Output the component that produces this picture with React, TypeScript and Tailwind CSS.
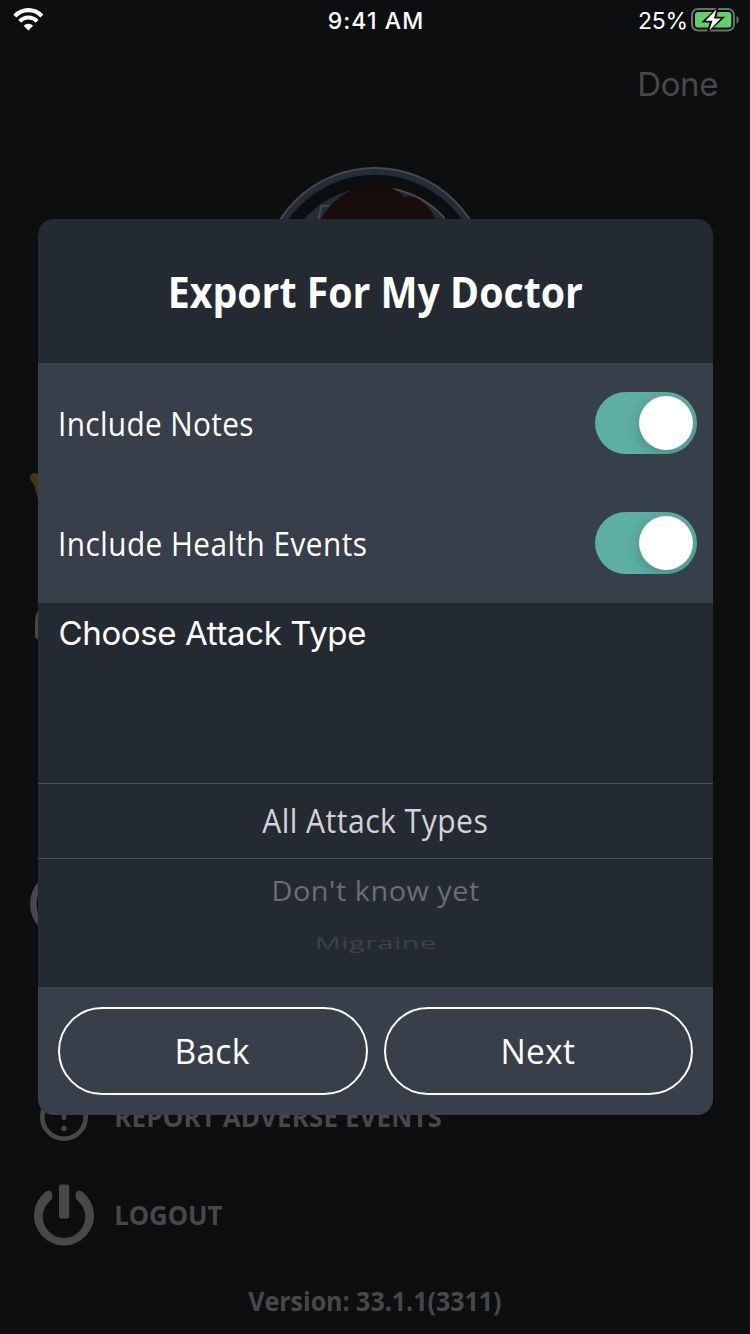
import type { ReactNode } from "react";

const sans = "font-['Open_Sans','Noto_Sans',sans-serif]";

function WifiIcon() {
  return (
    <svg width="30" height="23" viewBox="0 0 30 23" fill="none">
      <path d="M1.9 8.1 A18.4 18.4 0 0 1 28.9 8.1" stroke="#fff" strokeWidth="4.2" />
      <path d="M6.8 13.3 A11.6 11.6 0 0 1 24 13.3" stroke="#fff" strokeWidth="4.2" />
      <path d="M10.7 17.8 A6.6 6.6 0 0 1 20.1 17.8 L15.4 22.6 Z" fill="#fff" />
    </svg>
  );
}

function BatteryIcon() {
  return (
    <svg width="48" height="24" viewBox="0 0 48 24" fill="none">
      <rect x="1" y="1" width="42" height="21.5" rx="6" stroke="#6d6e70" strokeWidth="2" />
      <path d="M45.5 8 C48.5 9 48.5 14.5 45.5 15.5 Z" fill="#6d6e70" />
      <rect x="4" y="4" width="36.3" height="15.5" rx="3.2" fill="#65d06b" />
      <path d="M26.6 0 L12 13.8 H19.6 L17 23.6 L32.4 9.4 H24.8 Z" fill="#0c0e10" stroke="#0c0e10" strokeWidth="1.5" />
      <path d="M25.4 1.4 L14.6 12.8 H21.4 L18.4 22.2 L29.8 10.4 H22.9 Z" fill="#fff" />
    </svg>
  );
}

function Avatar() {
  return (
    <svg width="228" height="228" viewBox="0 0 228 228" fill="none">
      <circle cx="114" cy="114" r="109.5" stroke="#222d38" strokeWidth="6.4" />
      <circle cx="114" cy="114" r="113" stroke="#484848" strokeWidth="2" />
      <circle cx="114" cy="114" r="94" fill="#222d38" />
      <path d="M132 21.8 A94 94 0 0 1 184 51.5" stroke="#4b4b4b" strokeWidth="1.8" />
      <path d="M57.5 53 L60.5 38.5 L69 39.5" stroke="#484848" strokeWidth="2" />
      <path d="M59 54 C68 36 88 18.5 112 18.5 C126 18 139 23 143 30 C156 26 168 38 176 54 L176 80 H59 Z" fill="#180d0a" />
    </svg>
  );
}

function TrophyIcon() {
  return (
    <svg width="68" height="60" viewBox="0 0 68 60" fill="none">
      <circle cx="4.8" cy="7.8" r="4.8" fill="#42361a" />
      <path d="M1 10.5 L3.5 14 L8 29 L14 30 L9.6 7 Z" fill="#42361a" />
    </svg>
  );
}

function CardIcon() {
  return (
    <svg width="60" height="32" viewBox="0 0 60 32" fill="none">
      <path d="M5 0 C2 4 1 9 1 15 V26 C1 29 2.5 30.5 6 30.5 H54 V0 Z" fill="#484848" />
    </svg>
  );
}

function InfoIcon() {
  return (
    <svg width="68" height="68" viewBox="0 0 68 68" fill="none">
      <circle cx="34" cy="34" r="30.7" stroke="#484848" strokeWidth="6.5" />
    </svg>
  );
}

function AlertIcon() {
  return (
    <svg width="48" height="48" viewBox="0 0 48 48" fill="none">
      <circle cx="24" cy="24" r="21.7" stroke="#484848" strokeWidth="4.6" />
      <path d="M24 12 V25" stroke="#484848" strokeWidth="4.6" strokeLinecap="round" />
      <circle cx="24" cy="35.4" r="2.6" fill="#484848" />
    </svg>
  );
}

function PowerIcon() {
  return (
    <svg width="60" height="62" viewBox="0 0 60 62" fill="none">
      <path
        d="M11.3 8 C14 6 18.3 6.5 18.3 10 V13.3 C18.3 14.8 17.6 15.4 16.7 16.2 A21.2 21.2 0 1 0 43.3 16.2 C42.4 15.4 41.7 14.8 41.7 13.3 V10 C41.7 6.5 46 6 48.7 8 A30 30 0 1 1 11.3 8 Z"
        fill="#484848"
      />
      <rect x="25" y="0.5" width="10.2" height="34" rx="2" fill="#484848" />
    </svg>
  );
}

function MenuRow({ icon, label, className }: { icon: ReactNode; label?: ReactNode; className: string }) {
  return (
    <div className={`flex items-center ${className}`}>
      <div className="flex w-[68px] shrink-0 justify-center">{icon}</div>
      {label}
    </div>
  );
}

function ToggleRow({ children }: { children: ReactNode }) {
  return (
    <div className="flex h-[120px] items-center justify-between pl-5 pr-4">
      {children}
      <div className="flex h-[62px] w-[102px] items-center justify-end overflow-hidden rounded-full bg-[#5dafa3] p-1">
        <div className="h-[54px] w-[54px] rounded-full bg-white shadow-[0_4px_14px_rgba(0,0,0,0.2)]" />
      </div>
    </div>
  );
}

function PillButton({ children }: { children: ReactNode }) {
  return (
    <button className="flex h-[88px] flex-1 items-center justify-center rounded-full border-2 border-white text-[35px] text-white">
      {children}
    </button>
  );
}

export default function App() {
  return (
    <div className={`relative h-[1334px] w-[750px] overflow-hidden bg-[#0c0e10] ${sans}`}>
      <div className="flex h-full flex-col whitespace-nowrap">
        <div className="grid h-10 grid-cols-3 items-center pl-[13px] pr-[11px] font-[Inter,sans-serif] text-[23px] text-white">
          <WifiIcon />
          <div className="pt-[3px] text-center font-medium tracking-[1.1px]">9:41 AM</div>
          <div className="flex items-center justify-end gap-[3px]">
            <span className="pt-[3px] tracking-[-0.2px]">25%</span>
            <BatteryIcon />
          </div>
        </div>
        <div className="flex h-[89px] items-center justify-end pr-[32px] pt-[3px] font-[Inter,sans-serif] text-[33px] tracking-[-0.4px] text-[#484848]">
          Done
        </div>
        <div className="flex justify-center pt-10">
          <Avatar />
        </div>
        <div className="flex flex-col pl-[30px] pt-14 text-[27px] font-bold text-[#484848]">
          <MenuRow icon={<TrophyIcon />} className="h-[98px]" />
          <MenuRow icon={<CardIcon />} className="h-[152px]" />
          <MenuRow icon={<InfoIcon />} className="h-[367px] pt-[39px]" />
          <MenuRow
            icon={<AlertIcon />}
            className="h-[98px]"
            label={<span className="origin-left scale-x-[0.96] pl-[17px] pt-px tracking-[0.15px]">REPORT ADVERSE EVENTS</span>}
          />
          <MenuRow
            icon={<PowerIcon />}
            className="h-[98px]"
            label={<span className="origin-left scale-x-[0.95] pl-[17px] pt-px">LOGOUT</span>}
          />
        </div>
        <div className="flex h-[71px] items-center justify-center pt-[5px] text-[27px] font-bold text-[#484848]">
          <span className="scale-x-[0.925]">Version: 33.1.1(3311)</span>
        </div>
      </div>

      <div className="absolute left-[38px] top-[219px] flex h-[896px] w-[675px] flex-col overflow-hidden whitespace-nowrap rounded-2xl bg-[#242a32] text-white">
        <div className="flex h-36 items-center justify-center pt-0.5">
          <h1 className="scale-x-[0.913] text-[43px] font-bold">Export For My Doctor</h1>
        </div>
        <div className="bg-[#363f4a] text-[32px]">
          <ToggleRow>
            <span className="origin-left scale-x-[0.93] pt-0.5 tracking-[0.4px]">Include Notes</span>
          </ToggleRow>
          <ToggleRow>
            <span className="origin-left scale-x-[0.93] pt-0.5 tracking-[0.5px]">Include Health Events</span>
          </ToggleRow>
        </div>
        <div className="flex h-[60px] items-center pl-[20.5px] pt-0.5 font-[Inter,sans-serif] text-[33px] tracking-[-0.37px]">
          Choose Attack Type
        </div>
        <div className="flex h-[324px] flex-col items-stretch pt-[120px] text-center text-[32px]">
          <div className="flex h-[76px] items-center justify-center border-y border-[#4b5159] text-[#d3d4d6]">
            <span className="scale-x-[0.94] tracking-[0.5px]">All Attack Types</span>
          </div>
          <div className="flex h-[61px] items-center justify-center pt-0.5 text-[#6a6e74]">
            <span className="scale-x-[0.9] scale-y-[0.87] tracking-[0.6px]">Don't know yet</span>
          </div>
          <div className="flex h-[45px] items-center justify-center text-[#3c4249]">
            <span className="scale-x-[0.9] scale-y-[0.53] tracking-[0.6px]">Migraine</span>
          </div>
        </div>
        <div className="flex h-32 items-center gap-4 bg-[#363f4a] px-5">
          <PillButton>
            <span className="scale-x-[0.96] pr-px tracking-[0.2px]">Back</span>
          </PillButton>
          <PillButton>
            <span className="scale-x-[0.96] pr-px tracking-[0.2px]">Next</span>
          </PillButton>
        </div>
      </div>
    </div>
  );
}
